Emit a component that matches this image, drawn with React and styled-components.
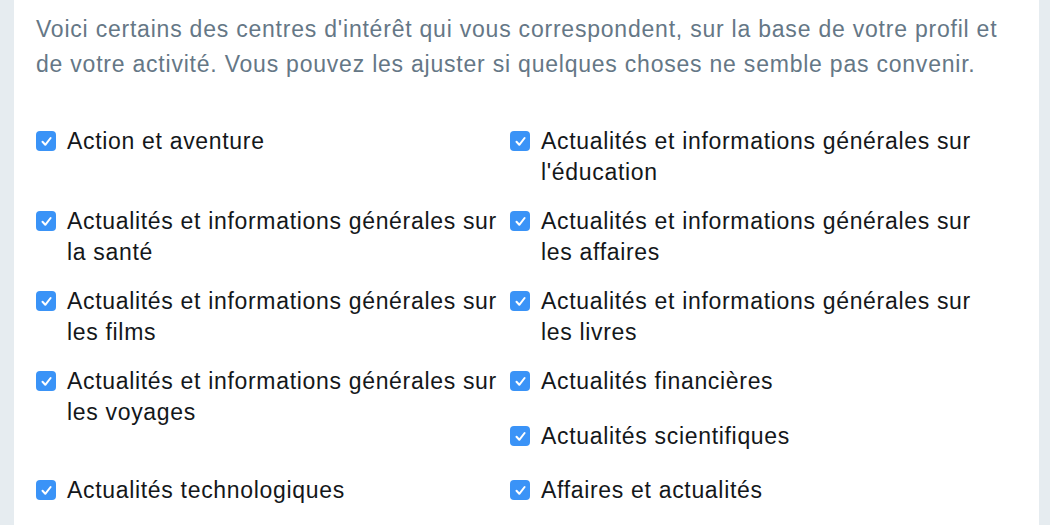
import React from "react";
import styled, { createGlobalStyle } from "styled-components";

const Global = createGlobalStyle`
  html, body { margin: 0; padding: 0; background: #e6ecf0; }
  body { font-family: "Liberation Sans", Arial, Helvetica, sans-serif; }
`;

const Page = styled.div`
  display: flex;
  padding: 0 11px 0 14px;
  min-height: 525px;
  box-sizing: border-box;
`;

const Panel = styled.section`
  flex: 1;
  background: #ffffff;
  padding: 12px 22px 40px 22px;
`;

const Intro = styled.p`
  margin: 0 0 44px 0;
  font-size: 23px;
  letter-spacing: 0.78px;
  line-height: 35px;
  color: #657786;
  max-width: 975px;
`;

const Grid = styled.div`
  display: grid;
  grid-template-columns: 474px 474px;
  row-gap: 18px;
  align-items: start;
`;

const Stack = styled.div`
  display: flex;
  flex-direction: column;
  gap: 24px;
  padding-bottom: 5px;
`;

const Item = styled.label`
  display: flex;
  align-items: flex-start;
  gap: 11px;
  font-size: 23px;
  letter-spacing: 0.68px;
  line-height: 31px;
  color: #14171a;
  cursor: pointer;
`;

const Box = styled.span`
  flex: none;
  width: 20px;
  height: 20px;
  margin-top: 5px;
  border-radius: 4px;
  background: ${(p) => (p.$checked ? "#3a93f7" : "#fff")};
  display: flex;
  align-items: center;
  justify-content: center;
`;

const Text = styled.span`
  flex: 1;
`;

function Check({ label }) {
  return (
    <Item>
      <Box $checked>
        <svg width="13" height="13" viewBox="0 0 13 13" fill="none">
          <path d="M2.5 6.8 L5.3 9.8 L10.6 3" stroke="#fff" strokeWidth="2" strokeLinecap="round" strokeLinejoin="round" />
        </svg>
      </Box>
      <Text>{label}</Text>
    </Item>
  );
}

const G = "Actualités et informations générales sur";

export default function App() {
  return (
    <>
      <Global />
      <Page>
        <Panel>
          <Intro>
            Voici certains des centres d'intérêt qui vous correspondent, sur la base de votre profil et de votre activité. Vous pouvez les ajuster si quelques choses ne semble pas convenir.
          </Intro>
          <Grid>
            <Check label="Action et aventure" />
            <Check label={`${G} l'éducation`} />
            <Check label={`${G} la santé`} />
            <Check label={`${G} les affaires`} />
            <Check label={`${G} les films`} />
            <Check label={`${G} les livres`} />
            <Check label={`${G} les voyages`} />
            <Stack>
              <Check label="Actualités financières" />
              <Check label="Actualités scientifiques" />
            </Stack>
            <Check label="Actualités technologiques" />
            <Check label="Affaires et actualités" />
          </Grid>
        </Panel>
      </Page>
    </>
  );
}
